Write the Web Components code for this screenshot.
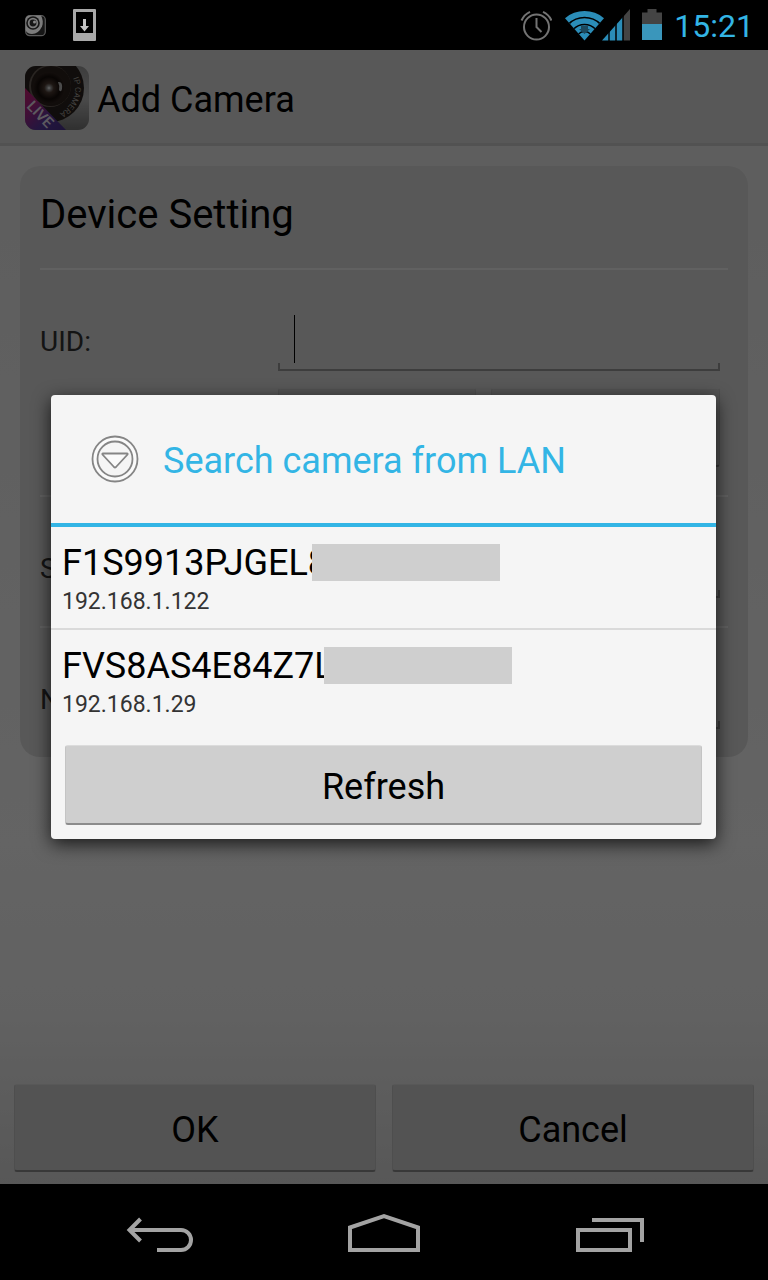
<!DOCTYPE html>
<html lang="en">
<head>
<meta charset="utf-8">
<meta name="viewport" content="width=device-width, initial-scale=1">
<title>Add Camera</title>
<style>
  body {
    margin: 0;
    min-height: 100vh;
    display: flex;
    flex-direction: column;
    background: #000;
    color: #000;
    font-family: Roboto, "Noto Sans", sans-serif;
  }
</style>
</head>
<body>
  <status-bar time="15:21"></status-bar>
  <app-screen>
    <action-bar>Add Camera</action-bar>
    <settings-card heading="Device Setting">
      <setting-row label="UID:" active>
        <holo-button label="Scan"></holo-button>
        <holo-button label="Search"></holo-button>
      </setting-row>
      <setting-row label="S"></setting-row>
      <setting-row label="N"></setting-row>
    </settings-card>
    <holo-button slot="footer">OK</holo-button>
    <holo-button slot="footer">Cancel</holo-button>
    <search-dialog slot="dialog" heading="Search camera from LAN">
      <camera-item uid="F1S9913PJGEL8" ip="192.168.1.122" shown="250"></camera-item>
      <camera-item uid="FVS8AS4E84Z7L" ip="192.168.1.29" shown="262"></camera-item>
      <holo-button slot="action">Refresh</holo-button>
    </search-dialog>
  </app-screen>
  <nav-bar></nav-bar>

<script>
// Shared by all elements: open shadow root filled from a template
class BaseElement extends HTMLElement {
  connectedCallback() {
    if (this.shadowRoot) return;
    const template = document.createElement("template");
    template.innerHTML = `<style>*, :host { box-sizing: border-box; }</style>` + this.render();
    this.attachShadow({ mode: "open" }).appendChild(template.content.cloneNode(true));
  }

  attr(name) {
    return this.getAttribute(name) || "";
  }
}

class StatusBar extends BaseElement {
  render() {
    return `
      <style>
        :host {
          display: flex;
          align-items: center;
          gap: 12px;
          height: 50px;
          padding: 0 14px 0 24px;
          background: #000;
          color: #33b5e5;
        }
        svg { display: block; flex: none; }
        .download { margin: 0 auto 0 12px; }
        time { padding-top: 2px; font-size: 32px; line-height: 38px; }
      </style>
      <svg width="24" height="32" viewBox="0 0 24 32" aria-hidden="true">
        <rect x="1.7" y="6.7" width="19.6" height="20" rx="4" fill="#161616" stroke="#5a5a5a" stroke-width="1.2"/>
        <path d="M1.500 10Q2 6.500 6 6.500H17Q20 12 18 17.500Q14.500 25 8 25Q3 25 1.500 21Z" fill="#7c7c7c"/>
        <circle cx="9" cy="14" r="6.800" fill="#161616"/>
        <circle cx="9" cy="14" r="4.300" fill="none" stroke="#7c7c7c" stroke-width="1.800"/>
        <circle cx="10.500" cy="13" r="1.500" fill="#888"/>
      </svg>
      <svg class="download" width="24" height="34" viewBox="0 0 24 34" aria-hidden="true">
        <rect x="1" y="1" width="23" height="32" rx="1" fill="#a9a9a9"/>
        <rect x="4" y="4" width="17" height="21" fill="#000"/>
        <path d="M11 11h3v7h3l-4.500 5.500L8 18h3z" fill="#c4c4c4"/>
      </svg>
      <svg width="32" height="32" viewBox="0 0 32 32" aria-hidden="true" fill="none" stroke="#737373" stroke-width="2">
        <circle cx="16.500" cy="18" r="12.500"/>
        <path d="M16.500 9v9l5 5M1.500 11.500Q4 5.500 10 2.800M31.500 11.500Q29 5.500 23 2.800"/>
      </svg>
      <svg width="66" height="32" viewBox="0 0 66 32" aria-hidden="true">
        <clipPath id="fan"><path d="M1 9.200A30 30 0 0 1 40 9.200L20.500 31.500Z"/></clipPath>
        <g clip-path="url(#fan)">
          <rect width="40" height="32" fill="#2b8db8"/>
          <g fill="none" stroke="#000" stroke-width="1.600">
            <circle cx="20.500" cy="31" r="22.500"/>
            <circle cx="20.500" cy="31" r="15.500"/>
            <circle cx="20.500" cy="31" r="8.500"/>
          </g>
        </g>
        <path d="M17 17h7v3h2l-5.500 5-5.500-5h2z" fill="#1d4a5e"/>
        <path d="M38 31.500L59 8V31.500Z" fill="#2b8db8"/>
        <path d="M59 31.500V8L66 0V31.500Z" fill="#444"/>
        <path d="M45 32V21M52 32V12M59 32V6" stroke="#000" stroke-width="1.500"/>
      </svg>
      <svg width="20" height="32" viewBox="0 0 20 32" aria-hidden="true">
        <path d="M0 3.500h5.500V0h9v3.500H20V15H0z" fill="#444"/>
        <path d="M0 15h20v16H0z" fill="#3a96bb"/>
      </svg>
      <time>${this.attr("time")}</time>
    `;
  }
}

// App window: content, footer buttons, and a modal layer on top
class AppScreen extends BaseElement {
  render() {
    return `
      <style>
        :host {
          position: relative;
          flex: 1;
          display: flex;
          flex-direction: column;
          background: linear-gradient(#e8e8e8, #f9f9f9 70%, #f3f3f3 85%, #dadada);
        }
        footer {
          display: grid;
          grid-template-columns: 1fr 1fr;
          gap: 16px;
          margin-top: auto;
          padding: 20px 14px 12px;
          --button-height: 88px;
        }
        .scrim {
          position: absolute;
          inset: 0;
          display: flex;
          align-items: center;
          padding: 0 52px 0 51px;
          background: rgba(0, 0, 0, 0.6);
        }
      </style>
      <slot></slot>
      <footer><slot name="footer"></slot></footer>
      <div class="scrim"><slot name="dialog"></slot></div>
    `;
  }
}

class ActionBar extends BaseElement {
  render() {
    return `
      <style>
        :host {
          display: flex;
          align-items: center;
          gap: 8px;
          height: 96px;
          padding: 2px 25px 0;
          background: #dcdcdc;
          border-bottom: 3px solid #cecece;
        }
        svg { display: block; }
        h1 { margin: 0; padding-top: 4px; font-size: 36px; line-height: 42px; font-weight: 400; }
      </style>
      <svg width="64" height="64" viewBox="0 0 64 64" aria-hidden="true">
        <defs>
          <clipPath id="tile"><rect width="64" height="64" rx="11"/></clipPath>
          <linearGradient id="metal" x1="0" y1="0" x2="0" y2="1">
            <stop offset="0" stop-color="#999"/><stop offset=".5" stop-color="#bbb"/><stop offset="1" stop-color="#777"/>
          </linearGradient>
          <radialGradient id="lens">
            <stop offset="0" stop-color="#fff"/><stop offset=".12" stop-color="#999"/><stop offset=".3" stop-color="#4a3830"/>
            <stop offset=".7" stop-color="#150d0a"/><stop offset="1" stop-color="#30241f"/>
          </radialGradient>
          <linearGradient id="ribbon" x1="0" y1="0" x2="1" y2="1">
            <stop offset="0" stop-color="#c81c70"/><stop offset=".3" stop-color="#a82484"/><stop offset=".65" stop-color="#5838a0"/><stop offset="1" stop-color="#483088"/>
          </linearGradient>
          <path id="ring" d="M48 12A27 27 0 0 1 28 49"/>
        </defs>
        <g clip-path="url(#tile)">
          <rect width="64" height="64" fill="url(#metal)"/>
          <circle cx="25" cy="22" r="34" fill="#29221e"/>
          <circle cx="25" cy="20" r="21" fill="#665c55"/>
          <circle cx="26" cy="20" r="20" fill="#2c211d"/>
          <circle cx="24" cy="22" r="16" fill="url(#lens)"/>
          <path d="M33 16Q38 15 37 23Q36 27 34 24Q35 20 33 16Z" fill="#bbb"/>
          <path d="M0 22L41 64H0Z" fill="url(#ribbon)"/>
        </g>
        <text font-size="8" fill="#a5a09b"><textPath href="#ring">IP CAMERA</textPath></text>
        <text transform="translate(1 41) rotate(46)" font-size="15" font-weight="500" fill="#e8e0ee">LIVE</text>
      </svg>
      <h1><slot></slot></h1>
    `;
  }
}

class SettingsCard extends BaseElement {
  render() {
    return `
      <style>
        :host {
          display: block;
          margin: 20px;
          padding: 0 20px;
          border-radius: 20px;
          background: #dcdcdc;
        }
        h2 { margin: 0; padding: 25px 0 29px; font-size: 40px; line-height: 48px; font-weight: 400; }
      </style>
      <h2>${this.attr("heading")}</h2>
      <slot></slot>
    `;
  }
}

class SettingRow extends BaseElement {
  render() {
    return `
      <style>
        :host {
          display: grid;
          grid-template-columns: 238px 1fr;
          align-items: center;
          row-gap: 17px;
          padding: 37px 8px 28px 0;
          border-top: 2px solid #f2f2f2;
          --button-height: 79px;
        }
        label { padding-top: 6px; font-size: 28px; line-height: 34px; color: #333; }
        input {
          width: 100%;
          height: 64px;
          padding: 0 16px;
          border: 0;
          outline: 0;
          border-bottom: 2px solid #999;
          font: 36px Roboto, sans-serif;
          /* short ticks at both ends of the underline */
          background:
            linear-gradient(#999, #999) 0 100% / 2px 6px no-repeat,
            linear-gradient(#999, #999) 100% 100% / 2px 6px no-repeat;
        }
        :host([active]) input {
          background:
            linear-gradient(#000, #000) 16px 8px / 1px 48px no-repeat,
            linear-gradient(#999, #999) 0 100% / 2px 6px no-repeat,
            linear-gradient(#999, #999) 100% 100% / 2px 6px no-repeat;
        }
        .extra { grid-column: 2; display: grid; grid-template-columns: 198px 1fr; gap: 15px; }
        .extra[hidden] { display: none; }
      </style>
      <label for="field">${this.attr("label")}</label>
      <input id="field" type="text">
      <div class="extra" ${this.childElementCount ? "" : "hidden"}><slot></slot></div>
    `;
  }
}

class HoloButton extends BaseElement {
  render() {
    const label = this.attr("label");
    return `
      <style>
        :host { display: block; }
        button {
          display: block;
          width: 100%;
          height: var(--button-height, 80px);
          padding: 4px 0 0;
          border: 1px solid #c4c4c4;
          border-top-color: #dcdcdc;
          border-bottom: 2px solid #8c8c8c;
          border-radius: 3px;
          background: #cfcfcf;
          color: #000;
          font: 36px/42px Roboto, sans-serif;
        }
      </style>
      <button type="button" ${label ? `aria-label="${label}"` : ""}><slot></slot></button>
    `;
  }
}

class SearchDialog extends BaseElement {
  render() {
    return `
      <style>
        :host {
          display: block;
          flex: 1;
          border-radius: 4px;
          background: #f5f5f5;
          box-shadow: 0 5px 18px rgba(0, 0, 0, 0.75);
        }
        header {
          display: flex;
          align-items: center;
          gap: 24px;
          height: 132px;
          padding: 0 40px;
          border-bottom: 4px solid #33b5e5;
          color: #33b5e5;
        }
        svg { display: block; }
        h2 { margin: 0; padding-top: 4px; font-size: 36px; line-height: 42px; font-weight: 400; }
        .action { padding: 14px; }
      </style>
      <section role="dialog" aria-labelledby="title">
        <header>
          <svg width="48" height="48" viewBox="0 0 48 48" aria-hidden="true" fill="#fafafa" stroke="#858585" stroke-width="1.800">
            <circle cx="24" cy="24" r="22.500"/>
            <circle cx="24" cy="24" r="17.500" fill="#f5f5f5"/>
            <path d="M12 18.500H36Q37 18.500 36.500 19.500L25 32Q24 33 23 32L11.500 19.500Q11 18.500 12 18.500Z"/>
          </svg>
          <h2 id="title">${this.attr("heading")}</h2>
        </header>
        <slot></slot>
        <div class="action"><slot name="action"></slot></div>
      </section>
    `;
  }
}

class CameraItem extends BaseElement {
  render() {
    return `
      <style>
        :host { display: block; padding: 15px 11px 12px; }
        :host(:not(:first-of-type)) { border-top: 2px solid #dadada; }
        .uid { position: relative; margin-bottom: 4px; font-size: 36px; line-height: 42px; }
        /* covers the private end of the id */
        .mask {
          position: absolute;
          top: 2px;
          left: ${this.attr("shown")}px;
          width: 188px;
          height: 37px;
          background: #cfcfcf;
        }
        .ip { font-size: 23px; line-height: 28px; color: #333; }
      </style>
      <div class="uid">${this.attr("uid")}<span class="mask"></span></div>
      <div class="ip">${this.attr("ip")}</div>
    `;
  }
}

class NavBar extends BaseElement {
  render() {
    return `
      <style>
        :host { display: flex; justify-content: center; height: 96px; background: #000; }
        button { width: 224px; padding: 0; border: 0; background: none; }
        svg { display: block; margin: 0 auto; fill: none; stroke: #a3a3a3; stroke-width: 4; }
      </style>
      <button type="button" aria-label="Back">
        <svg width="80" height="96" viewBox="0 0 80 96"><path d="M20.500 35L9.500 46L20.500 57M9.500 46H61a10 10 0 0 1 0 20H37"/></svg>
      </button>
      <button type="button" aria-label="Home">
        <svg width="80" height="96" viewBox="0 0 80 96"><path d="M6 66V43.500L40 32.200L74 43.500V66Z"/></svg>
      </button>
      <button type="button" aria-label="Recent apps">
        <svg width="80" height="96" viewBox="0 0 80 96"><path d="M10 46H62V66H10ZM24 36H74V58"/></svg>
      </button>
    `;
  }
}

customElements.define("status-bar", StatusBar);
customElements.define("app-screen", AppScreen);
customElements.define("action-bar", ActionBar);
customElements.define("settings-card", SettingsCard);
customElements.define("setting-row", SettingRow);
customElements.define("holo-button", HoloButton);
customElements.define("search-dialog", SearchDialog);
customElements.define("camera-item", CameraItem);
customElements.define("nav-bar", NavBar);
</script>
</body>
</html>
